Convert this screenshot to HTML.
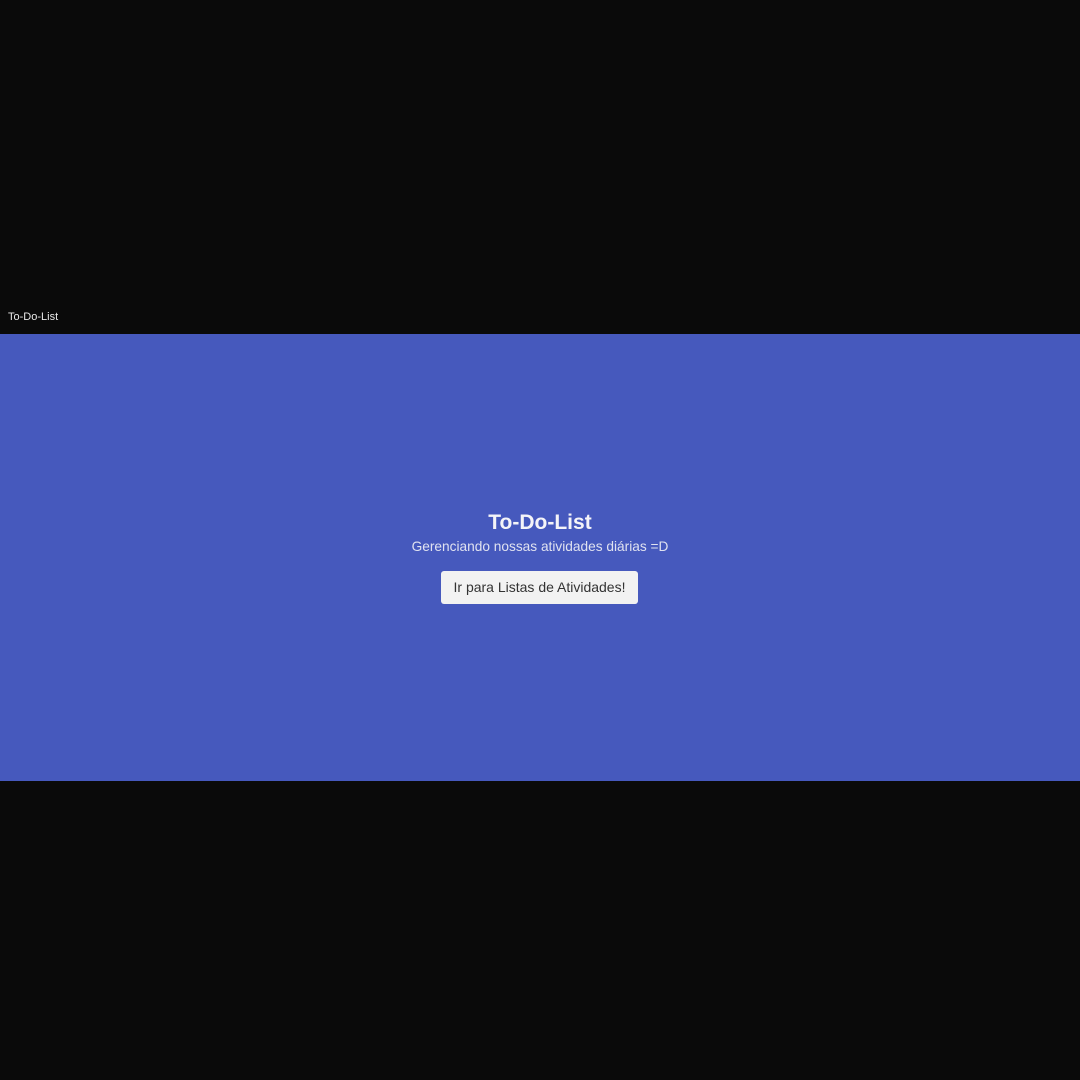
<!DOCTYPE html>
<html><head><meta charset="utf-8"><style>
html,body{margin:0;padding:0;width:1080px;height:1080px;background:#0a0a0a;overflow:hidden;font-family:"Liberation Sans","DejaVu Sans",sans-serif}
.lbl{position:absolute;left:8px;top:311px;font-size:11px;color:#e8e8e8}
.band{position:absolute;left:0;top:334px;width:1080px;height:447px;background:#4659bd}
h1{position:absolute;left:0;width:1080px;top:511px;margin:0;text-align:center;font-size:21px;font-weight:bold;color:#f4f4f8}
.sub{position:absolute;left:0;width:1080px;top:539px;text-align:center;font-size:13.7px;color:#e0e2f0}
.btn{position:absolute;left:441px;top:571px;width:197px;height:33px;background:#f2f2f2;border-radius:3px;text-align:center;line-height:33px;font-size:14px;color:#333}
</style></head><body>
<div class="lbl">To-Do-List</div>
<div class="band"></div>
<h1>To-Do-List</h1>
<div class="sub">Gerenciando nossas atividades diárias =D</div>
<div class="btn">Ir para Listas de Atividades!</div>
</body></html>
